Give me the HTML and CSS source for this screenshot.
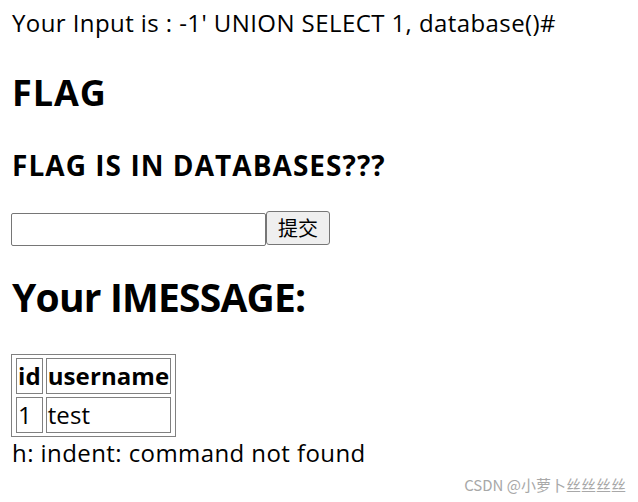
FILE: index.html
```html
<!DOCTYPE html>
<html>
<head>
<meta charset="utf-8">
<link rel="stylesheet" href="styles.css">
</head>
<body>
<div class="line">Your Input is : -1' UNION SELECT 1, database()#</div>
<h2 class="flag">FLAG</h2>
<h3 class="sub">FLAG IS IN DATABASES???</h3>
<form class="form">
  <input class="field" type="text">
  <button class="btn" type="button">提交</button>
</form>
<h1 class="title">Your IMESSAGE:</h1>
<table class="tbl">
  <tr><th>id</th><th>username</th></tr>
  <tr><td>1</td><td>test</td></tr>
</table>
<div class="line">h: indent: command not found</div>
<div class="mark">CSDN @小萝卜丝丝丝丝</div>
</body>
</html>
```
FILE: styles.css
```css
html, body {
  margin: 0;
  background: #fff;
}
body {
  padding: 7px 11px 0 11px;
  font-family: "Open Sans", "Noto Sans CJK SC", sans-serif;
  font-size: 24px;
  line-height: 32px;
  letter-spacing: 0.42px;
  color: #000;
  height: 502px;
  box-sizing: border-box;
  position: relative;
}
.line {
  padding-left: 1px;
}
.flag {
  margin: 32px 0 0;
  padding-left: 1px;
  font-size: 36px;
  line-height: 44px;
  letter-spacing: 0.9px;
  font-weight: 700;
}
.sub {
  margin: 32px 0 0;
  padding-left: 1px;
  font-size: 28px;
  line-height: 36px;
  letter-spacing: 1.05px;
  font-weight: 700;
}
.form {
  margin: 28px 0 0;
  display: flex;
  align-items: flex-start;
}
.field {
  margin: 2px 0 0;
  width: 255px;
  height: 33px;
  box-sizing: border-box;
  border: 1px solid #767676;
  border-radius: 2px;
  padding: 0;
  background: #fff;
}
.btn {
  margin: 0;
  width: 64px;
  height: 34px;
  box-sizing: border-box;
  border: 1px solid #767676;
  border-radius: 3px;
  background: #efefef;
  font-family: "Noto Sans CJK SC", sans-serif;
  font-size: 20px;
  line-height: 30px;
  letter-spacing: 0;
  padding: 0;
  color: #000;
}
.title {
  margin: 24px 0 0;
  padding-left: 1px;
  font-size: 39px;
  line-height: 54px;
  letter-spacing: -0.8px;
  font-weight: 700;
}
.tbl {
  margin-top: 30px;
  border: 1px solid #808080;
  border-spacing: 3px;
  padding: 0 1px;
  letter-spacing: 0.1px;
}
.tbl th, .tbl td {
  border: 1px solid #808080;
  padding: 1px;
  text-align: left;
  font-size: 24px;
  line-height: 32px;
}
.tbl th {
  font-weight: 700;
}
.mark {
  position: absolute;
  right: 12px;
  bottom: 9px;
  font-family: "Noto Sans CJK SC", sans-serif;
  font-size: 15px;
  line-height: 16px;
  letter-spacing: 0;
  color: #a8a8a8;
}
```
